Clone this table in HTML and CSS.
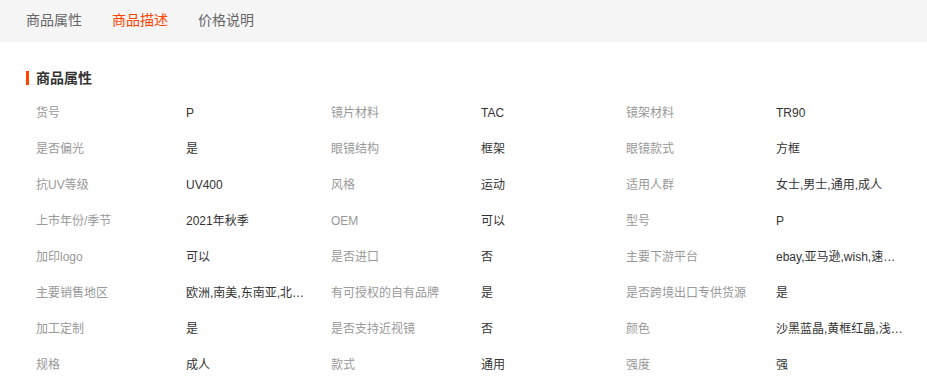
FILE: index.html
```html
<!DOCTYPE html>
<html lang="zh-CN">
<head>
<meta charset="utf-8">
<title>商品属性</title>
<link rel="stylesheet" href="styles.css">
</head>
<body>
<div class="tabs">
  <span class="tab">商品属性</span>
  <span class="tab active">商品描述</span>
  <span class="tab">价格说明</span>
</div>
<div class="section">
  <h2 class="title">商品属性</h2>
  <div class="grid">
    <span class="k">货号</span><span class="v">P</span>
    <span class="k">镜片材料</span><span class="v">TAC</span>
    <span class="k">镜架材料</span><span class="v">TR90</span>

    <span class="k">是否偏光</span><span class="v">是</span>
    <span class="k">眼镜结构</span><span class="v">框架</span>
    <span class="k">眼镜款式</span><span class="v">方框</span>

    <span class="k">抗UV等级</span><span class="v">UV400</span>
    <span class="k">风格</span><span class="v">运动</span>
    <span class="k">适用人群</span><span class="v">女士,男士,通用,成人</span>

    <span class="k">上市年份/季节</span><span class="v">2021年秋季</span>
    <span class="k">OEM</span><span class="v">可以</span>
    <span class="k">型号</span><span class="v">P</span>

    <span class="k">加印logo</span><span class="v">可以</span>
    <span class="k">是否进口</span><span class="v">否</span>
    <span class="k">主要下游平台</span><span class="v">ebay,亚马逊,wish,速卖通,独立站,LAZADA</span>

    <span class="k">主要销售地区</span><span class="v">欧洲,南美,东南亚,北美,东北亚,中东</span>
    <span class="k">有可授权的自有品牌</span><span class="v">是</span>
    <span class="k">是否跨境出口专供货源</span><span class="v">是</span>

    <span class="k">加工定制</span><span class="v">是</span>
    <span class="k">是否支持近视镜</span><span class="v">否</span>
    <span class="k">颜色</span><span class="v">沙黑蓝晶,黄框红晶,浅灰白晶,亮黑灰片</span>

    <span class="k">规格</span><span class="v">成人</span>
    <span class="k">款式</span><span class="v">通用</span>
    <span class="k">强度</span><span class="v">强</span>
  </div>
</div>
</body>
</html>
```
FILE: styles.css
```css
* { box-sizing: border-box; }
body {
  margin: 0;
  background: #fff;
  font-family: "Liberation Sans", "Noto Sans CJK SC", sans-serif;
  color: #333;
}
.tabs {
  height: 42px;
  background: #f5f5f5;
  display: flex;
  align-items: center;
  gap: 30px;
  padding-left: 26px;
}
.tab {
  font-size: 14px;
  line-height: 14px;
  color: #666;
  margin-top: -2px;
}
.tab.active { color: #ff4400; }
.section { padding-left: 26px; }
.title {
  margin: 29px 0 10px;
  font-size: 14px;
  line-height: 14px;
  font-weight: bold;
  color: #333;
  border-left: 3px solid #ff4400;
  padding-left: 7px;
}
.grid {
  display: grid;
  grid-template-columns: 150px 145px 150px 145px 150px 145px;
  grid-auto-rows: 36px;
  padding-left: 10px;
  font-size: 12px;
  line-height: 36px;
}
.k { color: #999; white-space: nowrap; }
.v {
  color: #333;
  white-space: nowrap;
  overflow: hidden;
  text-overflow: ellipsis;
  padding-right: 16px;
}
```
